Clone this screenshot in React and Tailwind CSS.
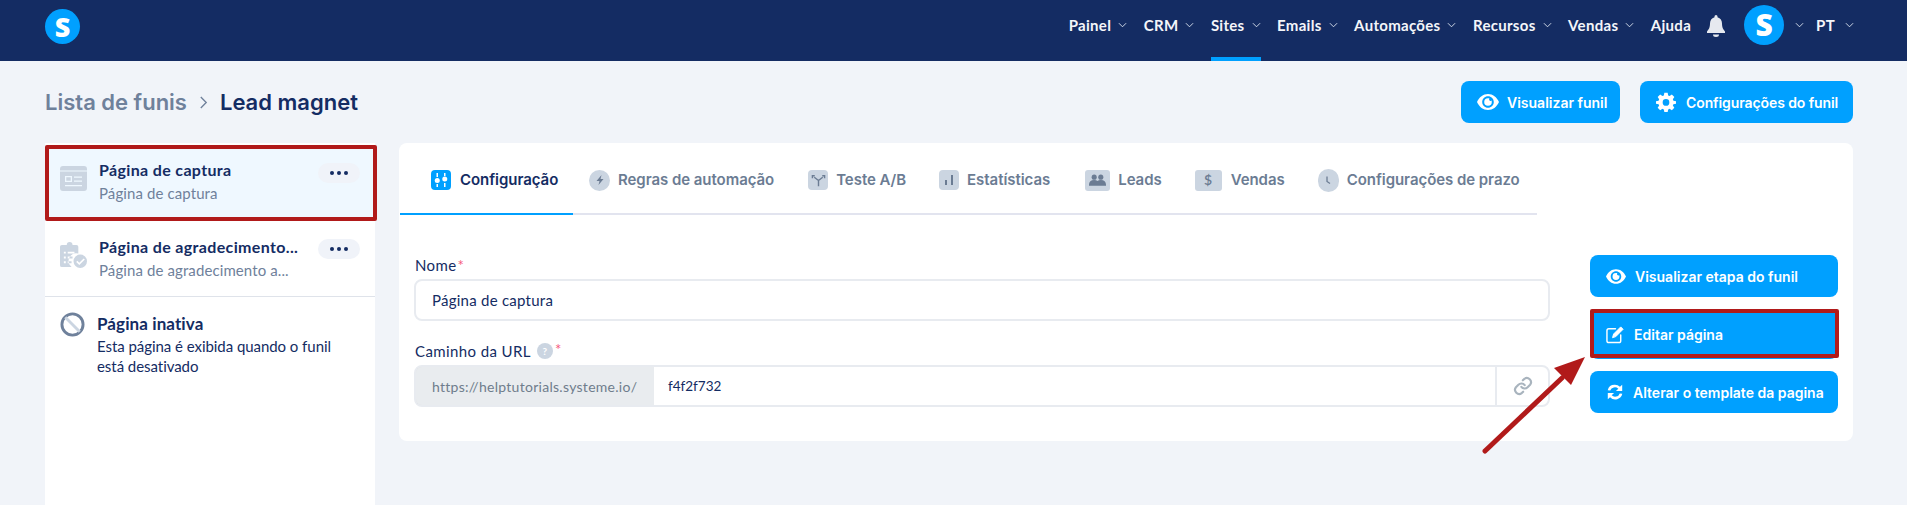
import React from "react";

const Chevron = ({ className = "" }) => (
  <svg viewBox="0 0 10 6" className={`w-[9px] h-[6px] ${className}`} fill="none" stroke="#dfe6f2" strokeWidth="1">
    <path d="M1 1l4 4 4-4" />
  </svg>
);

const Eye = ({ className = "" }) => (
  <svg viewBox="0 0 22 16" className={className} fill="white">
    <path fillRule="evenodd" d="M11 0C6.2 0 2.2 3 0 8c2.2 5 6.2 8 11 8s8.8-3 11-8c-2.2-5-6.2-8-11-8zm0 2.2c-3.2 0-5.8 2.6-5.8 5.8s2.6 5.8 5.8 5.8 5.8-2.6 5.8-5.8-2.600-5.800-5.800-5.800z" />
    <path d="M11 4.200a3.800 3.800 0 1 0 3.800 3.800c0-.5-.1-1-.3-1.400a1.500 1.500 0 0 1-2.100-2.100c-.4-.2-.9-.3-1.400-.3z" />
  </svg>
);

const Gear = ({ className = "" }) => (
  <svg viewBox="0 0 24 24" className={className} fill="white">
    <path fillRule="evenodd" d="M10 1h4l.6 3.100 1.700.7L19 3l3 3-1.800 2.700.7 1.700L24 11v3l-3.100.6-.7 1.700L22 19l-3 3-2.700-1.800-1.700.7L14 24h-4l-.6-3.100-1.700-.7L5 22l-3-3 1.800-2.700-.7-1.700L0 14v-3l3.100-.6.7-1.700L2 6l3-3 2.700 1.800 1.700-.7zM12 8.500a4 4 0 1 0 0 8 4 4 0 0 0 0-8z" />
  </svg>
);

function NavItem({ label, active, caret = true }) {
  return (
    <div className={`flex self-stretch items-start gap-[7px] pt-[16px] border-b-4 ${active ? "border-[#00a0ff]" : "border-transparent"}`}>
      <span className="text-[15px] leading-[18px] font-bold text-[#f4f6fa] font-['Lato',sans-serif] tracking-[0.3px]">{label}</span>
      {caret && <Chevron className="mt-[6px]" />}
    </div>
  );
}

const TabIcon = ({ children, className = "" }) => (
  <span className={`flex items-center justify-center bg-[#cbd5e1] shrink-0 ${className}`}>{children}</span>
);

function Tab({ label, icon, active, className = "" }) {
  return (
    <div className={`flex items-center h-[72px] pt-1 border-b-2 -mb-[2px] ${active ? "border-[#00a0ff] text-[#142c63]" : "border-transparent text-[#6b7c93]"} ${className}`}>
      {icon}
      <span className="text-[15px] leading-5 font-semibold tracking-[-0.05px] font-['Inter',sans-serif] whitespace-nowrap">{label}</span>
    </div>
  );
}

function Dots() {
  return (
    <div className="w-[42px] h-5 rounded-[10px] bg-[#f0f3f9] flex items-center justify-center gap-[3px] shrink-0">
      <span className="w-[4px] h-[4px] rounded-full bg-[#142c63]" />
      <span className="w-[4px] h-[4px] rounded-full bg-[#142c63]" />
      <span className="w-[4px] h-[4px] rounded-full bg-[#142c63]" />
    </div>
  );
}

function ActionButton({ icon, label, gap = "gap-[9px]", height = "h-[42px]" }) {
  return (
    <div className={`${height} w-[248px] rounded-lg bg-[#00a0ff] flex items-center pl-4 ${gap} text-white text-[14px] font-semibold font-['Inter',sans-serif] whitespace-nowrap`}>
      {icon}
      <span>{label}</span>
    </div>
  );
}

export default function App() {
  return (
    <div className="relative h-[505px] overflow-hidden bg-[#f1f4f9] font-['Lato',sans-serif] text-[#142c63]">
      <header className="h-[61px] bg-[#142c63] flex items-start justify-between pl-[45px] pr-[53px]">
        <div className="mt-[9px] w-[35px] h-[35px] rounded-full bg-[#00a0ff] flex items-center justify-center">
          <span className="text-white text-[27px] leading-none font-extrabold font-['Open_Sans',sans-serif]">S</span>
        </div>
        <nav className="h-full flex items-start">
          <div className="flex items-start h-full gap-[16.5px]">
            <NavItem label="Painel" />
            <NavItem label="CRM" />
            <NavItem label="Sites" active />
            <NavItem label="Emails" />
            <NavItem label="Automações" />
            <NavItem label="Recursos" />
            <NavItem label="Vendas" />
            <NavItem label="Ajuda" caret={false} />
          </div>
          <svg viewBox="0 0 18 22" className="w-[18px] h-[22px] mt-[15px] ml-4" fill="#e6e9ef">
            <path d="M9 0a1.500 1.500 0 0 0-1.500 1.500v.7C4.500 3 3 5.600 3 8.500c0 4.500-1.500 6-3 8v1.500h18V16.500c-1.500-2-3-3.500-3-8 0-2.900-1.500-5.500-4.500-6.300v-.7A1.500 1.500 0 0 0 9 0zM6 19.500a3 2.500 0 0 0 6 0z" />
          </svg>
          <div className="ml-[19px] mt-[5px] w-10 h-10 rounded-full bg-[#00a0ff] flex items-center justify-center">
            <span className="text-white text-[30px] leading-none font-extrabold font-['Open_Sans',sans-serif]">S</span>
          </div>
          <Chevron className="ml-[11px] mt-[22px]" />
          <span className="ml-[12px] mt-[16px] text-[15px] leading-[18px] font-bold text-[#f4f6fa] tracking-[0.3px]">PT</span>
          <Chevron className="ml-[10px] mt-[22px]" />
        </nav>
      </header>

      <div className="flex items-center justify-between h-[82px] pl-[45px] pr-[54px]">
        <div className="flex items-center font-['Inter',sans-serif] text-[22px] leading-7 font-semibold">
          <span className="text-[#6f819b]">Lista de funis</span>
          <svg viewBox="0 0 10 14" className="w-[9px] h-[13px] mx-[12px]" fill="none" stroke="#6f819b" strokeWidth="1.500">
            <path d="M2 1l6 6-6 6" />
          </svg>
          <span className="text-[#142c63]">Lead magnet</span>
        </div>
        <div className="flex gap-5">
          <div className="w-[159px] h-[42px] rounded-lg bg-[#00a0ff] flex items-center pl-4 gap-2 text-white text-[14px] font-semibold font-['Inter',sans-serif]">
            <Eye className="w-[22px] h-4" />
            <span>Visualizar funil</span>
          </div>
          <div className="w-[213px] h-[42px] rounded-lg bg-[#00a0ff] flex items-center pl-4 gap-[10px] text-white text-[14px] font-semibold tracking-[-0.1px] font-['Inter',sans-serif]">
            <Gear className="w-5 h-5" />
            <span>Configurações do funil</span>
          </div>
        </div>
      </div>

      <div className="flex items-start pl-[45px] pr-[54px] gap-[24px]">
        <aside className="w-[330px] h-[400px] bg-white shrink-0">
          <div className="h-[76px] bg-[#eff8ff] flex items-start pl-[15px] pr-[15px] mt-[2px]">
            <svg viewBox="0 0 27 25" className="w-[27px] h-[25px] mt-[21px] shrink-0" fill="#cbd5e1">
              <path fillRule="evenodd" d="M3 0h21a3 3 0 0 1 3 3v19a3 3 0 0 1-3 3H3a3 3 0 0 1-3-3V3a3 3 0 0 1 3-3zM5 10v6h7v-6zm1.300 1.300h4.400v3.400H6.300zM14 10.500v1.300h8v-1.300zm0 4v1.300h8v-1.300zM5 19v1.200h17V19zM0 4.500v1h27v-1z" />
            </svg>
            <div className="ml-3 flex-1 min-w-0 pt-[15px]">
              <div className="text-[16px] leading-5 font-bold tracking-[0.35px]">Página de captura</div>
              <div className="text-[15px] leading-5 text-[#6f819b] mt-[3px] tracking-[0.1px]">Página de captura</div>
            </div>
            <div className="mt-[18px]"><Dots /></div>
          </div>
          <div className="h-[75px] flex items-start pl-[15px] pr-[15px] border-b border-[#dfe3ea] box-content">
            <svg viewBox="0 0 28 28" className="w-[27px] h-[27px] mt-[21px] shrink-0" fill="#cbd5e1">
              <path d="M10 0a3 3 0 0 1 3 3h4a2 2 0 0 1 2 2v7a8 8 0 0 0-7 14H2a2 2 0 0 1-2-2V5a2 2 0 0 1 2-2h5a3 3 0 0 1 3-3zM4 10v2h2v-2zm4 0v2h7v-2zM4 15v2h2v-2zm4 0v2h5v-2zM4 20v2h2v-2zm4 0v2h4v-2z" />
              <path fillRule="evenodd" d="M21 13a7 7 0 1 1 0 14 7 7 0 0 1 0-14zm3.500 4l-4.500 4.500-2-2-1.200 1.200 3.200 3.200 5.700-5.700z" />
            </svg>
            <div className="ml-3 flex-1 min-w-0 pt-[16px]">
              <div className="text-[16px] leading-5 font-bold whitespace-nowrap tracking-[0.35px]">Página de agradecimento...</div>
              <div className="text-[15px] leading-5 text-[#6f819b] mt-[3px] whitespace-nowrap tracking-[0.1px]">Página de agradecimento a...</div>
            </div>
            <div className="mt-[18px]"><Dots /></div>
          </div>
          <div className="flex items-start pl-[15px] pt-[15px]">
            <svg viewBox="0 0 26 26" className="w-[25px] h-[25px] shrink-0" fill="none">
              <circle cx="13" cy="13" r="11" stroke="#6f819b" strokeWidth="3" />
              <path d="M5.500 5.500l15 15" stroke="#cbd5e1" strokeWidth="3" />
            </svg>
            <div className="ml-3 pt-[2px]">
              <div className="text-[17px] leading-5 font-bold tracking-[0.1px]">Página inativa</div>
              <div className="text-[15px] leading-5 mt-[2px] tracking-[-0.05px]">Esta página é exibida quando o funil<br />está desativado</div>
            </div>
          </div>
        </aside>

        <main className="flex-1 h-[298px] bg-white rounded-lg">
          <div className="ml-[1px] w-[1137px] flex border-b-2 border-[#e2e4ef]">
            <Tab
              active
              label="Configuração"
              className="w-[173px] pl-[31px]"
              icon={
                <span className="w-5 h-5 rounded-[4px] bg-[#00a0ff] mr-[9px] shrink-0 flex items-center justify-center">
                  <svg viewBox="0 0 20 20" className="w-5 h-5" fill="white">
                    <rect x="5.500" y="3" width="1.500" height="4" /><rect x="5.500" y="14" width="1.500" height="3" /><circle cx="6.250" cy="10.500" r="2.500" />
                    <rect x="13" y="3" width="1.500" height="3" /><rect x="13" y="13" width="1.500" height="4" /><circle cx="13.750" cy="9" r="2.500" />
                  </svg>
                </span>
              }
            />
            <Tab
              label="Regras de automação"
              className="ml-[16px]"
              icon={
                <TabIcon className="w-[21px] h-[21px] rounded-full mr-2">
                  <svg viewBox="0 0 12 12" className="w-3 h-3" fill="#6b7c93"><path d="M7.500 1L2.500 7h3l-1 4 5-6h-3z" /></svg>
                </TabIcon>
              }
            />
            <Tab
              label="Teste A/B"
              className="ml-[34px]"
              icon={
                <TabIcon className="w-5 h-5 rounded-[4px] mr-2">
                  <svg viewBox="0 0 16 16" className="w-[15px] h-[15px]" fill="none" stroke="#6b7c93" strokeWidth="1.500">
                    <path d="M8 14V8M8 8L3.500 4.500M8 8l4.500-3.500M1.500 5.500V3h2.500M14.500 5.500V3H12" />
                  </svg>
                </TabIcon>
              }
            />
            <Tab
              label="Estatísticas"
              className="ml-[33px]"
              icon={
                <TabIcon className="w-5 h-5 rounded-[4px] mr-2">
                  <svg viewBox="0 0 20 20" className="w-5 h-5" fill="#6b7c93"><rect x="6" y="10" width="2" height="5" /><rect x="12" y="5" width="2" height="10" /></svg>
                </TabIcon>
              }
            />
            <Tab
              label="Leads"
              className="ml-[35px]"
              icon={
                <TabIcon className="w-[25px] h-[21px] rounded-[3px] mr-2">
                  <svg viewBox="0 0 18 12" className="w-[17px] h-3" fill="#6b7c93">
                    <circle cx="5.500" cy="3" r="2.700" /><circle cx="12.500" cy="3" r="2.700" />
                    <path d="M0 11c0-3 2-5 5.500-5 1.500 0 2.700.4 3.500 1 .8-.6 2-1 3.500-1C16 6 18 8 18 11v1H0z" />
                  </svg>
                </TabIcon>
              }
            />
            <Tab
              label="Vendas"
              className="ml-[33px]"
              icon={
                <TabIcon className="w-[27px] h-[21px] rounded-[3px] mr-[9px] text-[14px] leading-none font-semibold text-[#6b7c93]">$</TabIcon>
              }
            />
            <Tab
              label="Configurações de prazo"
              className="ml-[33px]"
              icon={
                <TabIcon className="w-[21px] h-[23px] rounded-full mr-2">
                  <svg viewBox="0 0 12 12" className="w-3 h-3" fill="none" stroke="#6b7c93" strokeWidth="1.300"><path d="M5 2.500V7.500L8 9.500" /></svg>
                </TabIcon>
              }
            />
          </div>
          <div className="flex pl-[15px] pr-[15px]">
            <div className="w-[1136px] pt-[40px]">
              <div className="pl-[1px] text-[15px] leading-5 tracking-[0.4px]">Nome<span className="text-[#f5587b] text-[15px] align-top ml-[1px]">*</span></div>
              <div className="mt-[4px] h-[42px] rounded-lg border-2 border-[#e8ebf0] flex items-center pl-4 text-[15px] tracking-[0.25px]">Página de captura</div>
              <div className="mt-[20px] pl-[1px] flex items-center text-[15px] leading-5 tracking-[0.4px]">
                Caminho da URL
                <span className="ml-[6px] w-4 h-4 rounded-full bg-[#cbd5e1] flex items-center justify-center text-white text-[10px] font-bold leading-none">?</span>
                <span className="text-[#f5587b] text-[15px] ml-[2px] -mt-[4px]">*</span>
              </div>
              <div className="mt-[4px] h-[42px] rounded-lg border-2 border-[#e8ebf0] flex overflow-hidden">
                <div className="-m-[2px] w-[240px] h-[42px] shrink-0 rounded-l-lg border-2 border-[#cfd4da] border-r-0 bg-[#e9ecef] flex items-center pl-4 text-[14px] text-[#6f7d8c] tracking-[0.28px]">https://helptutorials.systeme.io/</div>
                <div className="flex-1 flex items-center pl-[16px] text-[13.5px]">f4f2f732</div>
                <div className="w-[53px] border-l-2 border-[#e8ebf0] flex items-center justify-center">
                  <svg viewBox="0 0 24 24" className="w-5 h-5" fill="none" stroke="#a9b4be" strokeWidth="2.600" strokeLinecap="round" strokeLinejoin="round">
                    <path d="M10 13a5 5 0 0 0 7.500.5l3-3a5 5 0 0 0-7-7l-1.700 1.700" />
                    <path d="M14 11a5 5 0 0 0-7.500-.5l-3 3a5 5 0 0 0 7 7l1.700-1.700" />
                  </svg>
                </div>
              </div>
            </div>
            <div className="ml-[40px] pt-[40px] flex flex-col gap-3">
              <ActionButton icon={<Eye className="w-5 h-[15px]" />} label="Visualizar etapa do funil" />
              <ActionButton
                height="h-[50px]"
                icon={
                  <svg viewBox="0 0 20 20" className="w-[19px] h-[19px]" fill="none" stroke="white" strokeWidth="1.500" strokeLinecap="round">
                    <path d="M15.500 10.500v6a2 2 0 0 1-2 2H3a2 2 0 0 1-2-2V6a2 2 0 0 1 2-2h7" />
                    <path d="M7 13l1-3.500 7.500-7.500 2.500 2.500L10.500 12z" fill="white" strokeWidth="1" />
                  </svg>
                }
                label="Editar página"
              />
              <ActionButton
                icon={
                  <svg viewBox="0 0 20 20" className="w-[18px] h-[18px]" fill="white">
                    <path d="M10 2a8 8 0 0 1 5.500 2.200L18 2v7h-7l2.700-2.700A5.500 5.500 0 0 0 4.700 8.400L1.900 8A8 8 0 0 1 10 2zM2 11h7l-2.700 2.700a5.500 5.500 0 0 0 9-2.100l2.800.4A8 8 0 0 1 4.500 15.800L2 18z" />
                  </svg>
                }
                label="Alterar o template da pagina"
              />
            </div>
          </div>
        </main>
      </div>

      <div className="absolute left-[45px] top-[145px] w-[332px] h-[76px] border-4 border-[#b11a1a] rounded-[2px]" />
      <div className="absolute left-[1590px] top-[309px] w-[249px] h-[49px] border-4 border-[#b11a1a] rounded-[2px]" />
      <svg className="absolute left-[1470px] top-[345px] w-[125px] h-[115px]" viewBox="0 0 125 115" fill="none">
        <path d="M15 106L92 33" stroke="#b11a1a" strokeWidth="5" strokeLinecap="round" />
        <polygon points="115,12 84,23 101,40" fill="#b11a1a" />
      </svg>
    </div>
  );
}
